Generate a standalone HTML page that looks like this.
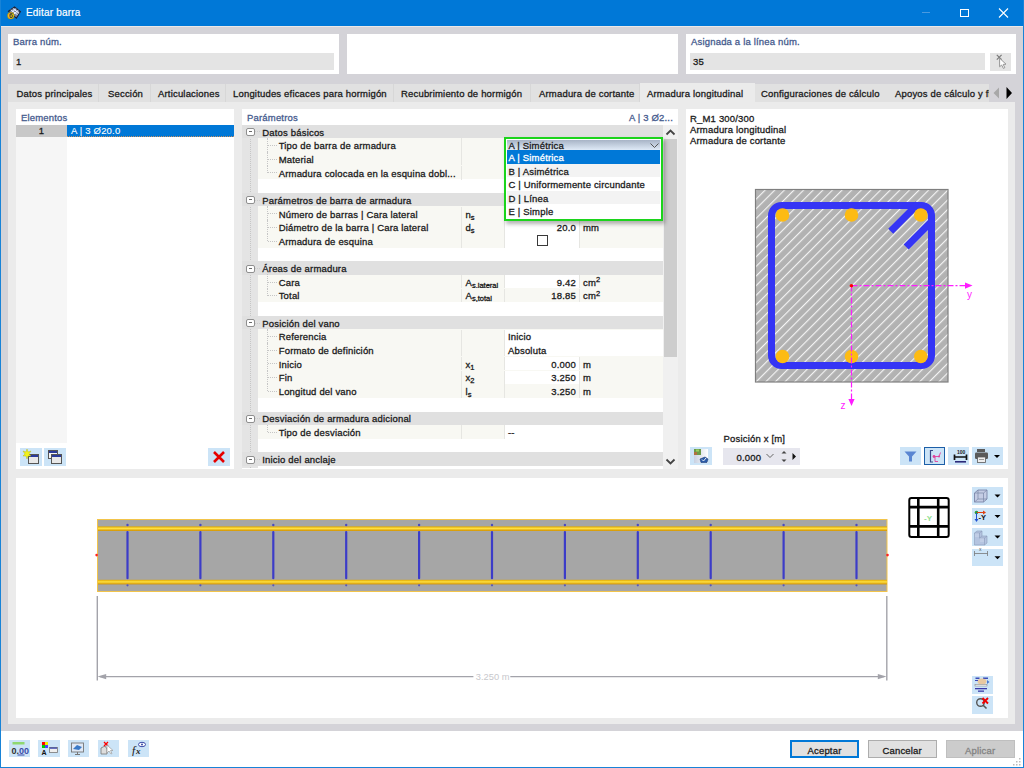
<!DOCTYPE html>
<html><head><meta charset="utf-8"><style>
*{margin:0;padding:0;box-sizing:border-box}
html,body{width:1024px;height:768px;overflow:hidden;background:#d4d3d8}
body{position:relative;font-family:"Liberation Sans",sans-serif;font-size:9.5px;letter-spacing:0.18px;color:#1b1b1b;-webkit-text-stroke-width:0.3px}
.a{position:absolute}
.t{position:absolute;white-space:nowrap;line-height:13.667px;padding-top:0.8px}
.lbl{color:#465b8e}
svg{position:absolute;overflow:visible}
svg text{-webkit-text-stroke-width:0;letter-spacing:0}
sub{font-size:7.5px;vertical-align:baseline;position:relative;top:2px;line-height:0;letter-spacing:0}
sup{font-size:7.5px;vertical-align:baseline;position:relative;top:-3.5px;line-height:0;letter-spacing:0}
</style></head><body>
<div class="a" style="left:0px;top:0px;width:1024px;height:26px;background:#0078d7;"></div>
<div class="a" style="left:0px;top:0px;width:1px;height:768px;background:#1883d7;"></div>
<div class="a" style="left:1023px;top:0px;width:1px;height:768px;background:#1883d7;"></div>
<div class="a" style="left:0px;top:767px;width:1024px;height:1px;background:#1883d7;"></div>
<div class="a" style="left:1px;top:26px;width:1022px;height:1px;background:#ece8e8;"></div>
<svg style="left:0;top:0" width="30" height="26"><path d="M8.5 11.3 L14.5 7 L20.4 11.7 L16.4 18.1 Z" fill="#7c88a8" stroke="#1c2234" stroke-width="1.1"/><path d="M10.8 9.8 L17.6 14.7 M12.8 8.4 L19.1 13.3 M10.6 13.2 L16.2 8.6 M12.8 14.9 L18.4 10.3" stroke="#eef2ff" stroke-width="1"/><circle cx="10.8" cy="15.7" r="3.4" fill="#f5c518" stroke="#8a6a08" stroke-width="0.5"/><text x="8.9" y="18.4" font-size="7" font-family="Liberation Sans" font-weight="bold" fill="#3a3a3a">6</text></svg>
<div class="t" style="left:26px;top:5.7px;color:#fff;line-height:14px;font-size:10px;-webkit-text-stroke-width:0.2px">Editar barra</div>
<div class="a" style="left:922px;top:12px;width:8px;height:1px;background:#4a9ae0;"></div>
<div class="a" style="left:960px;top:8.5px;width:9px;height:8.5px;background:transparent;border:1px solid #fff"></div>
<svg style="left:998px;top:8px" width="11" height="10"><path d="M1 0.5 L10 9.5 M10 0.5 L1 9.5" stroke="#fff" stroke-width="1.1"/></svg>
<div class="a" style="left:8px;top:34px;width:331px;height:40px;background:#fff;"></div>
<div class="t lbl" style="left:13px;top:34px;">Barra núm.</div>
<div class="a" style="left:13px;top:53px;width:321px;height:17px;background:#e4e4e4;"></div>
<div class="t" style="left:16px;top:54.5px;">1</div>
<div class="a" style="left:347px;top:34px;width:331px;height:40px;background:#fff;"></div>
<div class="a" style="left:686px;top:34px;width:330px;height:40px;background:#fff;"></div>
<div class="t lbl" style="left:691px;top:34px;">Asignada a la línea núm.</div>
<div class="a" style="left:690px;top:53px;width:295px;height:17px;background:#e4e4e4;"></div>
<div class="t" style="left:693px;top:54.5px;">35</div>
<div class="a" style="left:990px;top:53px;width:21px;height:18px;background:#e4e4e4;"></div>
<svg style="left:990px;top:53px" width="21" height="18"><path d="M6.8 1.9 L11.6 6.6 M11.6 1.9 L6.8 6.6" stroke="#7a7a7a" stroke-width="1.2"/><path d="M9.6 5.2 L9.6 13.8 L11.6 12 L13.4 15.4 L14.8 14.7 L13.2 11.4 L16 11.2 Z" fill="#fff" stroke="#8c8c8c" stroke-width="0.9"/></svg>
<div class="a" style="left:8px;top:84px;width:982px;height:18px;background:#e1e1e1;"></div>
<div class="a" style="left:8px;top:102px;width:1007px;height:622px;background:#ebebeb;"></div>
<div class="a" style="left:98px;top:84px;width:1px;height:18px;background:#d7d7d7;"></div>
<div class="a" style="left:150px;top:84px;width:1px;height:18px;background:#d7d7d7;"></div>
<div class="a" style="left:225px;top:84px;width:1px;height:18px;background:#d7d7d7;"></div>
<div class="a" style="left:393px;top:84px;width:1px;height:18px;background:#d7d7d7;"></div>
<div class="a" style="left:530px;top:84px;width:1px;height:18px;background:#d7d7d7;"></div>
<div class="a" style="left:639px;top:84px;width:1px;height:18px;background:#d7d7d7;"></div>
<div class="a" style="left:640px;top:83px;width:115px;height:19px;background:#ebebeb;"></div>
<div class="a" style="left:989px;top:84px;width:1px;height:18px;background:#d7d7d7;"></div>
<div class="t" style="left:895px;top:86.5px;">Apoyos de cálculo y fl</div>
<div class="t" style="left:16.5px;top:86.5px;">Datos principales</div>
<div class="t" style="left:108px;top:86.5px;">Sección</div>
<div class="t" style="left:158px;top:86.5px;">Articulaciones</div>
<div class="t" style="left:233px;top:86.5px;">Longitudes eficaces para hormigón</div>
<div class="t" style="left:401px;top:86.5px;">Recubrimiento de hormigón</div>
<div class="t" style="left:539px;top:86.5px;">Armadura de cortante</div>
<div class="t" style="left:647px;top:86.5px;">Armadura longitudinal</div>
<div class="t" style="left:761px;top:86.5px;">Configuraciones de cálculo</div>
<div class="a" style="left:989px;top:84px;width:26px;height:18px;background:#d4d3d8;"></div>
<svg style="left:990px;top:84px" width="26" height="18"><path d="M9 3.5 L3.5 9 L9 14.5 Z" fill="#a8a8a8"/><path d="M16.5 3 L22 9 L16.5 15 Z" fill="#000"/></svg>
<div class="a" style="left:16px;top:109px;width:218px;height:360px;background:#fff;"></div>
<div class="t lbl" style="left:21px;top:110px;">Elementos</div>
<div class="a" style="left:16px;top:137px;width:51px;height:306px;background:#f6f6f6;"></div>
<div class="a" style="left:16px;top:125px;width:51px;height:12px;background:#c8c8c8;"></div>
<div class="t" style="left:16px;top:123.7px;width:51px;text-align:center">1</div>
<div class="a" style="left:67px;top:125px;width:167px;height:12px;background:#0078d7;border-bottom:1px dotted #c89060"></div>
<div class="t" style="left:71px;top:123.7px;color:#fff;-webkit-text-stroke-width:0.1px">A | 3 Ø20.0</div>
<div class="a" style="left:20px;top:448px;width:22px;height:18px;background:#cce4f7;"></div>
<div class="a" style="left:44px;top:448px;width:22px;height:18px;background:#cce4f7;"></div>
<div class="a" style="left:208px;top:448px;width:22px;height:18px;background:#cce4f7;"></div>
<svg style="left:20px;top:448px" width="46" height="18"><rect x="8.5" y="6.5" width="10" height="9" fill="#e8e8e8" stroke="#555" stroke-width="1"/><rect x="9" y="7" width="9" height="2" fill="#2a3a9a"/><path d="M7 1 L8 4 L11 3 L9 6 L11 8 L8 8 L7 11 L6 8 L3 8 L5 6 L3 3 L6 4 Z" fill="#f2f21a" stroke="#b0b000" stroke-width="0.4"/><rect x="28.5" y="2.5" width="9" height="8" fill="#f4f4f4" stroke="#555" stroke-width="1"/><rect x="29" y="3" width="8" height="2" fill="#2a3a9a"/><rect x="31.5" y="6.5" width="10" height="9" fill="#e8e8e8" stroke="#555" stroke-width="1"/><rect x="32" y="7" width="9" height="2" fill="#2a3a9a"/></svg>
<svg style="left:208px;top:448px" width="22" height="18"><path d="M6 4 L16 14 M16 4 L6 14" stroke="#e60000" stroke-width="2.6"/></svg>
<div class="a" style="left:242px;top:109px;width:436px;height:360px;background:#fff;"></div>
<div class="t lbl" style="left:247px;top:110px;">Parámetros</div>
<div class="t lbl" style="right:351px;top:110px;">A | 3 Ø2...</div>
<div class="a" style="left:242px;top:124.8px;width:421px;height:343.7px;overflow:hidden;background:#fff">
<div class="a" style="left:0;top:0;width:16px;height:360px;background:#e4e4e4"></div>
<div class="a" style="left:8px;top:11px;width:0;height:360px;border-left:1px dotted #c6c6c6"></div>
<div class="a" style="left:0;top:0.0px;width:421px;height:13.2px;background:#e0e0e0"></div>
<div class="a" style="left:4.1px;top:3.20px;width:8.6px;height:8.1px;background:#fff;border:1.4px solid #8f8f8f;border-radius:2px"></div>
<div class="a" style="left:7px;top:6.40px;width:3px;height:1px;background:#6a6a6a"></div>
<div class="a" style="left:13px;top:6.60px;width:5px;height:0;border-top:1px dotted #cccccc"></div>
<div class="t" style="left:20.3px;top:0.0px">Datos básicos</div>
<div class="a" style="left:16px;top:13.20px;width:405px;height:14.1px;background:#f8f8f3"></div>
<div class="a" style="left:262px;top:13.65px;width:75px;height:13.8px;background:#fff"></div>
<div class="a" style="left:219px;top:13.65px;width:1px;height:13.8px;background:#e6e6e2"></div>
<div class="a" style="left:262px;top:13.65px;width:1px;height:13.8px;background:#e6e6e2"></div>
<div class="a" style="left:337px;top:13.65px;width:1px;height:13.8px;background:#e6e6e2"></div>
<div class="a" style="left:25px;top:13.15px;width:0;height:14.2px;border-left:1px dotted #c6c6c6"></div>
<div class="a" style="left:26px;top:20.25px;width:9px;height:0;border-top:1px dotted #c6c6c6"></div>
<div class="t" style="left:36.7px;top:13.65px">Tipo de barra de armadura</div>
<div class="a" style="left:16px;top:26.86px;width:405px;height:14.1px;background:#f8f8f3"></div>
<div class="a" style="left:262px;top:27.31px;width:75px;height:13.8px;background:#fff"></div>
<div class="a" style="left:219px;top:27.31px;width:1px;height:13.8px;background:#e6e6e2"></div>
<div class="a" style="left:262px;top:27.31px;width:1px;height:13.8px;background:#e6e6e2"></div>
<div class="a" style="left:337px;top:27.31px;width:1px;height:13.8px;background:#e6e6e2"></div>
<div class="a" style="left:25px;top:26.81px;width:0;height:14.2px;border-left:1px dotted #c6c6c6"></div>
<div class="a" style="left:26px;top:33.91px;width:9px;height:0;border-top:1px dotted #c6c6c6"></div>
<div class="t" style="left:36.7px;top:27.31px">Material</div>
<div class="a" style="left:16px;top:40.51px;width:405px;height:14.1px;background:#f8f8f3"></div>
<div class="a" style="left:262px;top:40.96px;width:75px;height:13.8px;background:#fff"></div>
<div class="a" style="left:219px;top:40.96px;width:1px;height:13.8px;background:#e6e6e2"></div>
<div class="a" style="left:262px;top:40.96px;width:1px;height:13.8px;background:#e6e6e2"></div>
<div class="a" style="left:337px;top:40.96px;width:1px;height:13.8px;background:#e6e6e2"></div>
<div class="a" style="left:25px;top:40.46px;width:0;height:7.5px;border-left:1px dotted #c6c6c6"></div>
<div class="a" style="left:26px;top:47.56px;width:9px;height:0;border-top:1px dotted #c6c6c6"></div>
<div class="t" style="left:36.7px;top:40.96px">Armadura colocada en la esquina dobl...</div>
<div class="a" style="left:0;top:68.27px;width:421px;height:13.2px;background:#e0e0e0"></div>
<div class="a" style="left:4.1px;top:71.47px;width:8.6px;height:8.1px;background:#fff;border:1.4px solid #8f8f8f;border-radius:2px"></div>
<div class="a" style="left:7px;top:74.67px;width:3px;height:1px;background:#6a6a6a"></div>
<div class="a" style="left:13px;top:74.87px;width:5px;height:0;border-top:1px dotted #cccccc"></div>
<div class="t" style="left:20.3px;top:68.27px">Parámetros de barra de armadura</div>
<div class="a" style="left:16px;top:81.47px;width:405px;height:14.1px;background:#f8f8f3"></div>
<div class="a" style="left:262px;top:81.92px;width:75px;height:13.8px;background:#fff"></div>
<div class="a" style="left:219px;top:81.92px;width:1px;height:13.8px;background:#e6e6e2"></div>
<div class="a" style="left:262px;top:81.92px;width:1px;height:13.8px;background:#e6e6e2"></div>
<div class="a" style="left:337px;top:81.92px;width:1px;height:13.8px;background:#e6e6e2"></div>
<div class="a" style="left:25px;top:81.42px;width:0;height:14.2px;border-left:1px dotted #c6c6c6"></div>
<div class="a" style="left:26px;top:88.52px;width:9px;height:0;border-top:1px dotted #c6c6c6"></div>
<div class="t" style="left:36.7px;top:81.92px">Número de barras | Cara lateral</div>
<div class="t sym" style="left:223.4px;top:81.92px">n<sub>s</sub></div>
<div class="a" style="left:16px;top:95.12px;width:405px;height:14.1px;background:#f8f8f3"></div>
<div class="a" style="left:262px;top:95.57px;width:75px;height:13.8px;background:#fff"></div>
<div class="a" style="left:219px;top:95.57px;width:1px;height:13.8px;background:#e6e6e2"></div>
<div class="a" style="left:262px;top:95.57px;width:1px;height:13.8px;background:#e6e6e2"></div>
<div class="a" style="left:337px;top:95.57px;width:1px;height:13.8px;background:#e6e6e2"></div>
<div class="a" style="left:25px;top:95.07px;width:0;height:14.2px;border-left:1px dotted #c6c6c6"></div>
<div class="a" style="left:26px;top:102.17px;width:9px;height:0;border-top:1px dotted #c6c6c6"></div>
<div class="t" style="left:36.7px;top:95.57px">Diámetro de la barra | Cara lateral</div>
<div class="t sym" style="left:223.4px;top:95.57px">d<sub>s</sub></div>
<div class="t" style="right:87px;top:95.57px">20.0</div>
<div class="t" style="left:341px;top:95.57px">mm</div>
<div class="a" style="left:16px;top:108.77px;width:405px;height:14.1px;background:#f8f8f3"></div>
<div class="a" style="left:262px;top:109.22px;width:75px;height:13.8px;background:#fff"></div>
<div class="a" style="left:219px;top:109.22px;width:1px;height:13.8px;background:#e6e6e2"></div>
<div class="a" style="left:262px;top:109.22px;width:1px;height:13.8px;background:#e6e6e2"></div>
<div class="a" style="left:337px;top:109.22px;width:1px;height:13.8px;background:#e6e6e2"></div>
<div class="a" style="left:25px;top:108.72px;width:0;height:7.5px;border-left:1px dotted #c6c6c6"></div>
<div class="a" style="left:26px;top:115.82px;width:9px;height:0;border-top:1px dotted #c6c6c6"></div>
<div class="t" style="left:36.7px;top:109.22px">Armadura de esquina</div>
<div class="a" style="left:295.2px;top:110.62px;width:10.8px;height:10.8px;background:#fff;border:1.2px solid #3a3a3a"></div>
<div class="a" style="left:0;top:136.53px;width:421px;height:13.2px;background:#e0e0e0"></div>
<div class="a" style="left:4.1px;top:139.73px;width:8.6px;height:8.1px;background:#fff;border:1.4px solid #8f8f8f;border-radius:2px"></div>
<div class="a" style="left:7px;top:142.93px;width:3px;height:1px;background:#6a6a6a"></div>
<div class="a" style="left:13px;top:143.13px;width:5px;height:0;border-top:1px dotted #cccccc"></div>
<div class="t" style="left:20.3px;top:136.53px">Áreas de armadura</div>
<div class="a" style="left:16px;top:149.73px;width:405px;height:14.1px;background:#f8f8f3"></div>
<div class="a" style="left:262px;top:150.18px;width:75px;height:13.8px;background:#fff"></div>
<div class="a" style="left:219px;top:150.18px;width:1px;height:13.8px;background:#e6e6e2"></div>
<div class="a" style="left:262px;top:150.18px;width:1px;height:13.8px;background:#e6e6e2"></div>
<div class="a" style="left:337px;top:150.18px;width:1px;height:13.8px;background:#e6e6e2"></div>
<div class="a" style="left:25px;top:149.68px;width:0;height:14.2px;border-left:1px dotted #c6c6c6"></div>
<div class="a" style="left:26px;top:156.78px;width:9px;height:0;border-top:1px dotted #c6c6c6"></div>
<div class="t" style="left:36.7px;top:150.18px">Cara</div>
<div class="t sym" style="left:223.4px;top:150.18px">A<sub>s,lateral</sub></div>
<div class="t" style="right:87px;top:150.18px">9.42</div>
<div class="t" style="left:341px;top:150.18px">cm<sup>2</sup></div>
<div class="a" style="left:16px;top:163.39px;width:405px;height:14.1px;background:#f8f8f3"></div>
<div class="a" style="left:219px;top:163.84px;width:1px;height:13.8px;background:#e6e6e2"></div>
<div class="a" style="left:262px;top:163.84px;width:1px;height:13.8px;background:#e6e6e2"></div>
<div class="a" style="left:337px;top:163.84px;width:1px;height:13.8px;background:#e6e6e2"></div>
<div class="a" style="left:25px;top:163.34px;width:0;height:7.5px;border-left:1px dotted #c6c6c6"></div>
<div class="a" style="left:26px;top:170.44px;width:9px;height:0;border-top:1px dotted #c6c6c6"></div>
<div class="t" style="left:36.7px;top:163.84px">Total</div>
<div class="t sym" style="left:223.4px;top:163.84px">A<sub>s,total</sub></div>
<div class="t" style="right:87px;top:163.84px">18.85</div>
<div class="t" style="left:341px;top:163.84px">cm<sup>2</sup></div>
<div class="a" style="left:0;top:191.14px;width:421px;height:13.2px;background:#e0e0e0"></div>
<div class="a" style="left:4.1px;top:194.34px;width:8.6px;height:8.1px;background:#fff;border:1.4px solid #8f8f8f;border-radius:2px"></div>
<div class="a" style="left:7px;top:197.54px;width:3px;height:1px;background:#6a6a6a"></div>
<div class="a" style="left:13px;top:197.74px;width:5px;height:0;border-top:1px dotted #cccccc"></div>
<div class="t" style="left:20.3px;top:191.14px">Posición del vano</div>
<div class="a" style="left:16px;top:204.35px;width:405px;height:14.1px;background:#f8f8f3"></div>
<div class="a" style="left:262px;top:204.8px;width:159px;height:13.8px;background:#fff"></div>
<div class="a" style="left:219px;top:204.8px;width:1px;height:13.8px;background:#e6e6e2"></div>
<div class="a" style="left:262px;top:204.8px;width:1px;height:13.8px;background:#e6e6e2"></div>
<div class="a" style="left:25px;top:204.30px;width:0;height:14.2px;border-left:1px dotted #c6c6c6"></div>
<div class="a" style="left:26px;top:211.40px;width:9px;height:0;border-top:1px dotted #c6c6c6"></div>
<div class="t" style="left:36.7px;top:204.8px">Referencia</div>
<div class="t" style="left:266px;top:204.8px">Inicio</div>
<div class="a" style="left:16px;top:218.00px;width:405px;height:14.1px;background:#f8f8f3"></div>
<div class="a" style="left:262px;top:218.45px;width:159px;height:13.8px;background:#fff"></div>
<div class="a" style="left:219px;top:218.45px;width:1px;height:13.8px;background:#e6e6e2"></div>
<div class="a" style="left:262px;top:218.45px;width:1px;height:13.8px;background:#e6e6e2"></div>
<div class="a" style="left:25px;top:217.95px;width:0;height:14.2px;border-left:1px dotted #c6c6c6"></div>
<div class="a" style="left:26px;top:225.05px;width:9px;height:0;border-top:1px dotted #c6c6c6"></div>
<div class="t" style="left:36.7px;top:218.45px">Formato de definición</div>
<div class="t" style="left:266px;top:218.45px">Absoluta</div>
<div class="a" style="left:16px;top:231.65px;width:405px;height:14.1px;background:#f8f8f3"></div>
<div class="a" style="left:262px;top:232.1px;width:75px;height:13.8px;background:#fff"></div>
<div class="a" style="left:219px;top:232.1px;width:1px;height:13.8px;background:#e6e6e2"></div>
<div class="a" style="left:262px;top:232.1px;width:1px;height:13.8px;background:#e6e6e2"></div>
<div class="a" style="left:337px;top:232.1px;width:1px;height:13.8px;background:#e6e6e2"></div>
<div class="a" style="left:25px;top:231.60px;width:0;height:14.2px;border-left:1px dotted #c6c6c6"></div>
<div class="a" style="left:26px;top:238.70px;width:9px;height:0;border-top:1px dotted #c6c6c6"></div>
<div class="t" style="left:36.7px;top:232.1px">Inicio</div>
<div class="t sym" style="left:223.4px;top:232.1px">x<sub>1</sub></div>
<div class="t" style="right:87px;top:232.1px">0.000</div>
<div class="t" style="left:341px;top:232.1px">m</div>
<div class="a" style="left:16px;top:245.30px;width:405px;height:14.1px;background:#f8f8f3"></div>
<div class="a" style="left:262px;top:245.75px;width:75px;height:13.8px;background:#fff"></div>
<div class="a" style="left:219px;top:245.75px;width:1px;height:13.8px;background:#e6e6e2"></div>
<div class="a" style="left:262px;top:245.75px;width:1px;height:13.8px;background:#e6e6e2"></div>
<div class="a" style="left:337px;top:245.75px;width:1px;height:13.8px;background:#e6e6e2"></div>
<div class="a" style="left:25px;top:245.25px;width:0;height:14.2px;border-left:1px dotted #c6c6c6"></div>
<div class="a" style="left:26px;top:252.35px;width:9px;height:0;border-top:1px dotted #c6c6c6"></div>
<div class="t" style="left:36.7px;top:245.75px">Fin</div>
<div class="t sym" style="left:223.4px;top:245.75px">x<sub>2</sub></div>
<div class="t" style="right:87px;top:245.75px">3.250</div>
<div class="t" style="left:341px;top:245.75px">m</div>
<div class="a" style="left:16px;top:258.96px;width:405px;height:14.1px;background:#f8f8f3"></div>
<div class="a" style="left:219px;top:259.41px;width:1px;height:13.8px;background:#e6e6e2"></div>
<div class="a" style="left:262px;top:259.41px;width:1px;height:13.8px;background:#e6e6e2"></div>
<div class="a" style="left:337px;top:259.41px;width:1px;height:13.8px;background:#e6e6e2"></div>
<div class="a" style="left:25px;top:258.91px;width:0;height:7.5px;border-left:1px dotted #c6c6c6"></div>
<div class="a" style="left:26px;top:266.01px;width:9px;height:0;border-top:1px dotted #c6c6c6"></div>
<div class="t" style="left:36.7px;top:259.41px">Longitud del vano</div>
<div class="t sym" style="left:223.4px;top:259.41px">l<sub>s</sub></div>
<div class="t" style="right:87px;top:259.41px">3.250</div>
<div class="t" style="left:341px;top:259.41px">m</div>
<div class="a" style="left:0;top:286.71px;width:421px;height:13.2px;background:#e0e0e0"></div>
<div class="a" style="left:4.1px;top:289.91px;width:8.6px;height:8.1px;background:#fff;border:1.4px solid #8f8f8f;border-radius:2px"></div>
<div class="a" style="left:7px;top:293.11px;width:3px;height:1px;background:#6a6a6a"></div>
<div class="a" style="left:13px;top:293.31px;width:5px;height:0;border-top:1px dotted #cccccc"></div>
<div class="t" style="left:20.3px;top:286.71px">Desviación de armadura adicional</div>
<div class="a" style="left:16px;top:299.92px;width:405px;height:14.1px;background:#f8f8f3"></div>
<div class="a" style="left:262px;top:300.37px;width:159px;height:13.8px;background:#fff"></div>
<div class="a" style="left:219px;top:300.37px;width:1px;height:13.8px;background:#e6e6e2"></div>
<div class="a" style="left:262px;top:300.37px;width:1px;height:13.8px;background:#e6e6e2"></div>
<div class="a" style="left:25px;top:299.87px;width:0;height:7.5px;border-left:1px dotted #c6c6c6"></div>
<div class="a" style="left:26px;top:306.97px;width:9px;height:0;border-top:1px dotted #c6c6c6"></div>
<div class="t" style="left:36.7px;top:300.37px">Tipo de desviación</div>
<div class="t" style="left:266px;top:300.37px">--</div>
<div class="a" style="left:0;top:327.67px;width:421px;height:13.2px;background:#e0e0e0"></div>
<div class="a" style="left:4.1px;top:330.87px;width:8.6px;height:8.1px;background:#fff;border:1.4px solid #8f8f8f;border-radius:2px"></div>
<div class="a" style="left:7px;top:334.07px;width:3px;height:1px;background:#6a6a6a"></div>
<div class="a" style="left:13px;top:334.27px;width:5px;height:0;border-top:1px dotted #cccccc"></div>
<div class="t" style="left:20.3px;top:327.67px">Inicio del anclaje</div>
</div>
<div class="a" style="left:663px;top:125px;width:15px;height:344px;background:#f0f0f0;"></div>
<div class="a" style="left:664px;top:139px;width:13px;height:218px;background:#cdcdcd;"></div>
<svg style="left:663px;top:125px" width="15" height="344"><path d="M3.5 9.5 L7.5 5.5 L11.5 9.5" fill="none" stroke="#444" stroke-width="1.8"/><path d="M3.5 334.5 L7.5 338.5 L11.5 334.5" fill="none" stroke="#444" stroke-width="1.8"/></svg>
<div class="a" style="left:506px;top:140px;width:3px;height:1px;background:transparent;"></div>
<div class="a" style="left:504px;top:137.3px;width:159px;height:83.7px;border:2.7px solid #1cd41c;background:#fff;box-shadow:2px 3px 4px rgba(0,0,0,0.3)"></div>
<div class="a" style="left:506.7px;top:140px;width:153.6px;height:10px;background:linear-gradient(#a8b4c6,#dfeaf7)"></div>
<div class="t" style="left:508.5px;top:137.8px;">A | Simétrica</div>
<svg style="left:649px;top:142px" width="12" height="8"><path d="M1.5 1.5 L5.5 5.5 L9.5 1.5" fill="none" stroke="#555" stroke-width="1"/></svg>
<div class="a" style="left:506.7px;top:150.0px;width:153.6px;height:13.6px;background:#0078d7"></div>
<div class="t" style="left:508.5px;top:150.3px;color:#fff">A | Simétrica</div>
<div class="a" style="left:506.7px;top:163.6px;width:153.6px;height:13.6px;background:#f3f3f3"></div>
<div class="t" style="left:508.5px;top:163.9px;color:#1b1b1b">B | Asimétrica</div>
<div class="a" style="left:506.7px;top:177.2px;width:153.6px;height:13.6px;background:#fff"></div>
<div class="t" style="left:508.5px;top:177.5px;color:#1b1b1b">C | Uniformemente circundante</div>
<div class="a" style="left:506.7px;top:190.8px;width:153.6px;height:13.6px;background:#f3f3f3"></div>
<div class="t" style="left:508.5px;top:191.10000000000002px;color:#1b1b1b">D | Línea</div>
<div class="a" style="left:506.7px;top:204.4px;width:153.6px;height:13.6px;background:#fff"></div>
<div class="t" style="left:508.5px;top:204.70000000000002px;color:#1b1b1b">E | Simple</div>
<div class="a" style="left:686px;top:109px;width:322px;height:360px;background:#fff;"></div>
<div class="t" style="left:690px;top:112.7px;line-height:11px">R_M1 300/300</div>
<div class="t" style="left:690px;top:123.7px;line-height:11px">Armadura longitudinal</div>
<div class="t" style="left:690px;top:134.7px;line-height:11px">Armadura de cortante</div>
<div class="a" style="left:690px;top:447px;width:22px;height:18px;background:#cce4f7;"></div>
<svg style="left:690px;top:447px" width="22" height="18"><defs><linearGradient id="pg" x1="0" y1="0" x2="1" y2="0"><stop offset="0" stop-color="#c8d0e0"/><stop offset="1" stop-color="#fff"/></linearGradient></defs><rect x="4" y="2" width="14" height="14" fill="url(#pg)"/><rect x="4" y="2" width="7" height="6" fill="#6a9a48"/><rect x="6" y="2.5" width="3" height="2" fill="#9ad060"/><rect x="4" y="5" width="3" height="3" fill="#b07040"/><path d="M10 12 L15 10 L18 12 L17 15.5 L11 15.5 Z" fill="#2a5aa8" stroke="#1a3a78" stroke-width="0.6"/><path d="M12 12.5 L13.5 14 L16 11" stroke="#fff" stroke-width="0.9" fill="none"/></svg>
<div class="t" style="left:723.5px;top:431px;">Posición x [m]</div>
<div class="a" style="left:723px;top:448px;width:77px;height:17px;background:#e6e6ee;"></div>
<div class="t" style="left:736.5px;top:450.5px;">0.000</div>
<svg style="left:723px;top:448px" width="77" height="17"><path d="M43.5 6 L47 9.5 L50.5 6" fill="none" stroke="#666" stroke-width="1"/><path d="M58.5 5.5 L61 3 L63.5 5.5 Z" fill="#444"/><path d="M58.5 11.5 L61 14 L63.5 11.5 Z" fill="#444"/><path d="M69.5 5 L73 8.5 L69.5 12 Z" fill="#111"/></svg>
<div class="a" style="left:900px;top:447px;width:21px;height:18px;background:#cce4f7;"></div>
<div class="a" style="left:924px;top:447px;width:21px;height:18px;background:#cce4f7;"></div>
<div class="a" style="left:948px;top:447px;width:21px;height:18px;background:#cce4f7;"></div>
<div class="a" style="left:972px;top:447px;width:31px;height:18px;background:#cce4f7;"></div>
<div class="a" style="left:924px;top:447px;width:21px;height:18px;background:#cce4f7;border:1.3px solid #1c5fa8"></div>
<svg style="left:900px;top:447px" width="104" height="18"><path d="M4.5 4.5 L16.5 4.5 L12 9.5 L12 14.5 L9 14.5 L9 9.5 Z" fill="#5a86d2"/><path d="M33 3.5 L30.5 3.5 L30.5 15 L33 15" fill="none" stroke="#3a4a8a" stroke-width="1.2"/><path d="M34 9.5 L39 9.5 L40.5 5.5 M35 10 L35 14.5 L38 14.5" stroke="#e0409a" stroke-width="0.9" fill="none"/><circle cx="34" cy="9.5" r="1.4" fill="#e0409a"/><circle cx="39" cy="9.5" r="1" fill="#e0409a"/><path d="M54.5 7.5 L54.5 13 M66.5 7.5 L66.5 13 M54.5 10 L66.5 10" stroke="#111" stroke-width="1.7"/><rect x="55" y="14" width="11" height="1.6" fill="#2a2a7a"/><text x="57" y="6.5" font-size="5" font-family="Liberation Sans" font-weight="bold" fill="#222">100</text><rect x="77" y="2" width="8" height="3" fill="#5a5a5a"/><rect x="75" y="5.5" width="13" height="6.5" rx="1.2" fill="#5a5a5a"/><rect x="77.5" y="10" width="8" height="5.5" fill="#eee" stroke="#5a5a5a" stroke-width="0.8"/><rect x="79" y="12" width="5" height="0.8" fill="#888"/><path d="M94 8 L100 8 L97 11 Z" fill="#000"/></svg>
<div class="a" style="left:16px;top:478px;width:992px;height:240px;background:#fff;"></div>
<svg style="left:0;top:0" width="1024" height="768">
<defs><pattern id="hatch" patternUnits="userSpaceOnUse" width="6.8" height="6.8" patternTransform="translate(2.4,0) rotate(45)"><rect x="0" y="0" width="6.8" height="6.8" fill="#b2b2b2"/><rect x="0" y="0" width="1.15" height="6.8" fill="#f4f4f4"/></pattern><linearGradient id="rebar" x1="0" y1="0" x2="0" y2="1"><stop offset="0" stop-color="#e0a800"/><stop offset="0.45" stop-color="#ffe040"/><stop offset="1" stop-color="#d09000"/></linearGradient></defs>
<rect x="755.5" y="189.5" width="192.5" height="192.5" fill="url(#hatch)" stroke="#7f7f7f" stroke-width="1.2"/>
<rect x="771.5" y="205.5" width="160" height="160" rx="10" ry="10" fill="none" stroke="#3535f5" stroke-width="7"/>
<line x1="890.7" y1="231.3" x2="918" y2="204" stroke="#3535f5" stroke-width="7"/>
<line x1="906.2" y1="247" x2="933" y2="220" stroke="#3535f5" stroke-width="7"/>
<circle cx="782.5" cy="215" r="6.8" fill="#fdbb13"/>
<circle cx="782.5" cy="356.5" r="6.8" fill="#fdbb13"/>
<circle cx="851.5" cy="215" r="6.8" fill="#fdbb13"/>
<circle cx="851.5" cy="356.5" r="6.8" fill="#fdbb13"/>
<circle cx="920.8" cy="215" r="6.8" fill="#fdbb13"/>
<circle cx="920.8" cy="356.5" r="6.8" fill="#fdbb13"/>
<line x1="851.5" y1="285.6" x2="966" y2="285.6" stroke="#ff1cff" stroke-width="1.2" stroke-dasharray="6,2,2,2"/>
<path d="M965 282.5 L972.5 285.6 L965 288.7 Z" fill="#ff1cff"/>
<line x1="851.5" y1="285.6" x2="851.5" y2="399" stroke="#ff1cff" stroke-width="1.2" stroke-dasharray="6,2,2,2"/>
<path d="M848.4 399 L851.5 406 L854.6 399 Z" fill="#ff1cff"/>
<circle cx="851.4" cy="285.7" r="1.8" fill="#ff0000"/>
<text x="967" y="297.5" font-family="Liberation Sans" font-size="10" fill="#ff1cff">y</text>
<text x="840.5" y="409" font-family="Liberation Sans" font-size="10" fill="#ff1cff">z</text>
<rect x="97.5" y="519.5" width="789.5" height="72" fill="#a6a6a6" stroke="#f2c44a" stroke-width="1"/>
<rect x="98" y="526.4" width="789" height="4.6" fill="url(#rebar)"/>
<rect x="98" y="579.8" width="789" height="4.6" fill="url(#rebar)"/>
<line x1="127.50" y1="532" x2="127.50" y2="578.2" stroke="#3c3cc8" stroke-width="2.2" stroke-linecap="round"/>
<circle cx="127.50" cy="525" r="1.2" fill="#4a4ac0"/>
<circle cx="127.50" cy="585.3" r="1.1" fill="#5a5ab8"/>
<line x1="200.40" y1="532" x2="200.40" y2="578.2" stroke="#3c3cc8" stroke-width="2.2" stroke-linecap="round"/>
<circle cx="200.40" cy="525" r="1.2" fill="#4a4ac0"/>
<circle cx="200.40" cy="585.3" r="1.1" fill="#5a5ab8"/>
<line x1="273.30" y1="532" x2="273.30" y2="578.2" stroke="#3c3cc8" stroke-width="2.2" stroke-linecap="round"/>
<circle cx="273.30" cy="525" r="1.2" fill="#4a4ac0"/>
<circle cx="273.30" cy="585.3" r="1.1" fill="#5a5ab8"/>
<line x1="346.20" y1="532" x2="346.20" y2="578.2" stroke="#3c3cc8" stroke-width="2.2" stroke-linecap="round"/>
<circle cx="346.20" cy="525" r="1.2" fill="#4a4ac0"/>
<circle cx="346.20" cy="585.3" r="1.1" fill="#5a5ab8"/>
<line x1="419.10" y1="532" x2="419.10" y2="578.2" stroke="#3c3cc8" stroke-width="2.2" stroke-linecap="round"/>
<circle cx="419.10" cy="525" r="1.2" fill="#4a4ac0"/>
<circle cx="419.10" cy="585.3" r="1.1" fill="#5a5ab8"/>
<line x1="492.00" y1="532" x2="492.00" y2="578.2" stroke="#3c3cc8" stroke-width="2.2" stroke-linecap="round"/>
<circle cx="492.00" cy="525" r="1.2" fill="#4a4ac0"/>
<circle cx="492.00" cy="585.3" r="1.1" fill="#5a5ab8"/>
<line x1="564.90" y1="532" x2="564.90" y2="578.2" stroke="#3c3cc8" stroke-width="2.2" stroke-linecap="round"/>
<circle cx="564.90" cy="525" r="1.2" fill="#4a4ac0"/>
<circle cx="564.90" cy="585.3" r="1.1" fill="#5a5ab8"/>
<line x1="637.80" y1="532" x2="637.80" y2="578.2" stroke="#3c3cc8" stroke-width="2.2" stroke-linecap="round"/>
<circle cx="637.80" cy="525" r="1.2" fill="#4a4ac0"/>
<circle cx="637.80" cy="585.3" r="1.1" fill="#5a5ab8"/>
<line x1="710.70" y1="532" x2="710.70" y2="578.2" stroke="#3c3cc8" stroke-width="2.2" stroke-linecap="round"/>
<circle cx="710.70" cy="525" r="1.2" fill="#4a4ac0"/>
<circle cx="710.70" cy="585.3" r="1.1" fill="#5a5ab8"/>
<line x1="783.60" y1="532" x2="783.60" y2="578.2" stroke="#3c3cc8" stroke-width="2.2" stroke-linecap="round"/>
<circle cx="783.60" cy="525" r="1.2" fill="#4a4ac0"/>
<circle cx="783.60" cy="585.3" r="1.1" fill="#5a5ab8"/>
<line x1="856.50" y1="532" x2="856.50" y2="578.2" stroke="#3c3cc8" stroke-width="2.2" stroke-linecap="round"/>
<circle cx="856.50" cy="525" r="1.2" fill="#4a4ac0"/>
<circle cx="856.50" cy="585.3" r="1.1" fill="#5a5ab8"/>
<circle cx="96.6" cy="555.1" r="1.3" fill="#ff2020"/>
<circle cx="887.5" cy="555.1" r="1.3" fill="#ff2020"/>
<line x1="97.3" y1="596" x2="97.3" y2="680.5" stroke="#a3a3aa" stroke-width="1.4"/>
<line x1="886.8" y1="596" x2="886.8" y2="680.5" stroke="#a3a3aa" stroke-width="1.4"/>
<line x1="100" y1="676.6" x2="473.4" y2="676.6" stroke="#a3a3aa" stroke-width="1.4"/>
<line x1="510.3" y1="676.6" x2="884" y2="676.6" stroke="#a3a3aa" stroke-width="1.4"/>
<path d="M97.5 676.6 L106.2 673.9 L106.2 679.3 Z" fill="#a3a3aa"/>
<path d="M886.5 676.6 L877.8 673.9 L877.8 679.3 Z" fill="#a3a3aa"/>
<text x="475.8" y="680.4" font-family="Liberation Sans" font-size="9.3" fill="#c8c8cc" letter-spacing="0">3.250 m</text>
</svg>
<svg style="left:906px;top:495px" width="46" height="46"><g fill="none" stroke="#000"><rect x="3.3" y="3.1" width="39.4" height="38.9" rx="2.2" stroke-width="2"/><path d="M12.3 3 L12.3 42 M32.2 3 L32.2 42 M3 12.1 L42.7 12.1 M3 31.4 L42.7 31.4" stroke-width="2.6"/></g><text x="18" y="25.5" font-family="Liberation Sans" font-size="8" font-weight="bold" fill="#90e090">-Y</text></svg>
<div class="a" style="left:972px;top:487.2px;width:31px;height:17.5px;background:#cce4f7;"></div>
<div class="a" style="left:972px;top:507.75px;width:31px;height:17.5px;background:#cce4f7;"></div>
<div class="a" style="left:972px;top:528.3px;width:31px;height:17.5px;background:#cce4f7;"></div>
<div class="a" style="left:972px;top:548.85px;width:31px;height:17.5px;background:#cce4f7;"></div>
<svg style="left:972px;top:487px" width="31" height="82"><g fill="#000"><path d="M22.5 7.5 L28.5 7.5 L25.5 10.5 Z"/><path d="M22.5 28 L28.5 28 L25.5 31 Z"/><path d="M22.5 48.6 L28.5 48.6 L25.5 51.6 Z"/><path d="M22.5 69.2 L28.5 69.2 L25.5 72.2 Z"/></g><path d="M2.5 6 L6 3 L15 3 L15 12 L11.5 15 L2.5 15 Z" fill="#c4cce4" stroke="#7a86a8" stroke-width="0.9"/><path d="M2.5 6 L11.5 6 L11.5 15 M11.5 6 L15 3 M6 3 L6 12 L15 12 M6 12 L2.5 15" fill="none" stroke="#7a86a8" stroke-width="0.7"/><circle cx="4.5" cy="25.5" r="1.8" fill="#2a9a3a"/><path d="M5 25.5 L12 25.5" stroke="#e04010" stroke-width="1"/><path d="M11 23.5 L14 25.5 L11 27.5Z" fill="#e04010"/><path d="M4.5 26 L4.5 33" stroke="#2050d0" stroke-width="1"/><path d="M2.5 32 L4.5 35 L6.5 32Z" fill="#2050d0"/><text x="6.5" y="33" font-size="7.5" font-family="Liberation Sans" font-weight="bold" fill="#111">-Y</text><path d="M2.5 46 L5 44 L10 44 L10 49 L15 49 L15 56 L12.5 58 L2.5 58 Z" fill="#b4c4e0" stroke="#8a9ab8" stroke-width="0.6"/><path d="M2.5 46 L7.5 46 L7.5 51 L12.5 51 L12.5 58 M7.5 46 L10 44 M7.5 51 L10 49 M12.5 51 L15 49" fill="none" stroke="#8a9ab8" stroke-width="0.6"/><path d="M3 47 L7 47 M3 49 L7 49 M8 52 L12 52 M8 54 L12 54" stroke="#dde6f5" stroke-width="0.6"/><path d="M2.5 64 L2.5 69 M15.5 64 L15.5 69 M2.5 66.5 L15.5 66.5" stroke="#777" stroke-width="0.8"/><text x="7" y="64" font-size="5" font-family="Liberation Sans" fill="#555">x</text></svg>
<div class="a" style="left:972px;top:676px;width:21px;height:18px;background:#cce4f7;"></div>
<div class="a" style="left:972px;top:696.25px;width:21px;height:17.5px;background:#cce4f7;"></div>
<svg style="left:972px;top:676px" width="21" height="38"><rect x="3.5" y="1.5" width="4" height="1.5" fill="#3a4ab8"/><rect x="11" y="1.5" width="5" height="1.5" fill="#3a4ab8"/><ellipse cx="10" cy="5.5" rx="4.5" ry="3" fill="#e8c8a0"/><rect x="3" y="4" width="3" height="1" fill="#3a4ab8"/><path d="M15 4 L17.5 6 L15 8 Z" fill="#4a7ad0"/><rect x="3" y="8.5" width="12" height="1.5" fill="#fff" stroke="#777" stroke-width="0.5"/><rect x="3" y="12" width="12" height="1.3" fill="#3a3aa8"/><rect x="6" y="14.5" width="6" height="1.3" fill="#3a3aa8"/><circle cx="8.5" cy="26.5" r="3.8" fill="none" stroke="#555" stroke-width="1.4"/><path d="M11.2 29.2 L14.5 32.5" stroke="#555" stroke-width="1.6"/><path d="M10.5 22 L16 27.5 M16 22 L10.5 27.5" stroke="#f00000" stroke-width="1.9"/></svg>
<div class="a" style="left:1px;top:731px;width:1022px;height:36px;background:#fff;"></div>
<div class="a" style="left:8.6px;top:739.8px;width:21.2px;height:17.5px;background:#cce4f7;"></div>
<div class="a" style="left:38.4px;top:739.8px;width:21.2px;height:17.5px;background:#cce4f7;"></div>
<div class="a" style="left:68.2px;top:739.8px;width:21.2px;height:17.5px;background:#cce4f7;"></div>
<div class="a" style="left:98.0px;top:739.8px;width:21.2px;height:17.5px;background:#cce4f7;"></div>
<div class="a" style="left:127.8px;top:739.8px;width:21.2px;height:17.5px;background:#cce4f7;"></div>
<svg style="left:8px;top:739px" width="145" height="19"><rect x="4.5" y="3" width="12" height="2.5" fill="#8fd870"/><text x="3.5" y="14.5" font-size="9" font-family="Liberation Sans" font-weight="bold" fill="#333" letter-spacing="-0.4">0.<tspan fill="#3a4aa8">00</tspan></text><rect x="9.5" y="15.5" width="7" height="1" fill="#3a4aa8"/><g transform="translate(-6,0)"><rect x="40" y="3" width="3" height="3" fill="#f00"/><rect x="43" y="3" width="3" height="3" fill="#ee0"/><rect x="40" y="6" width="3" height="3" fill="#0c0"/><rect x="43" y="6" width="3" height="3" fill="#44f"/><text x="39.5" y="16" font-size="7" font-family="Liberation Sans" font-weight="bold" fill="#111">A</text><rect x="47.5" y="8.5" width="8" height="5" fill="#eee" stroke="#777" stroke-width="0.8"/><rect x="48" y="8.5" width="7" height="1.2" fill="#2a3aa8"/></g><g transform="translate(-5,0)"><rect x="68.5" y="4" width="12" height="9" fill="#dfe8f5" stroke="#777" stroke-width="0.9"/><path d="M70 10 L74 6 L79 8 L76 11Z" fill="#3a7ac8"/><path d="M74.5 13 L74.5 15 M72 15.5 L77 15.5" stroke="#777"/></g><g transform="translate(-5,0)"><path d="M98 9 L102 7 L104 10 L104 15 L98 15 Z" fill="#ddd" stroke="#777" stroke-width="0.8"/><path d="M101 3 L105 7 M105 3 L101 7" stroke="#f00" stroke-width="1.3"/><path d="M104 6 L104 14 L106 12 L108 15 L109 14.5 L107.5 11.5 L110 11.5 Z" fill="#fff" stroke="#999" stroke-width="0.7"/></g><g transform="translate(-3,0)"><text x="126" y="15" font-size="12" font-family="Liberation Serif" font-style="italic" fill="#222">ƒ</text><text x="131" y="14.5" font-size="9" font-family="Liberation Serif" font-style="italic" font-weight="bold" fill="#222">x</text><ellipse cx="137" cy="5.5" rx="3.5" ry="2.2" fill="#fff" stroke="#3a4aa8" stroke-width="1"/><circle cx="137" cy="5.5" r="1" fill="#3a4aa8"/></g></svg>
<div class="a" style="left:790px;top:740.2px;width:69px;height:18px;background:#e1e1e1;border:2px solid #0078d7"></div>
<div class="t" style="left:790px;top:742.9px;width:69px;text-align:center">Aceptar</div>
<div class="a" style="left:867.7px;top:740.2px;width:69px;height:18px;background:#e1e1e1;border:1px solid #adadad"></div>
<div class="t" style="left:867.7px;top:742.9px;width:69px;text-align:center">Cancelar</div>
<div class="a" style="left:945.6px;top:740.2px;width:69px;height:18px;background:#cccccc;border:1px solid #bfbfbf"></div>
<div class="t" style="left:945.6px;top:742.9px;width:69px;text-align:center;color:#838383">Aplicar</div>
<svg style="left:1012px;top:756px" width="11" height="11"><g fill="#bbb"><rect x="7" y="2" width="1.5" height="1.5"/><rect x="4" y="5" width="1.5" height="1.5"/><rect x="7" y="5" width="1.5" height="1.5"/><rect x="1" y="8" width="1.5" height="1.5"/><rect x="4" y="8" width="1.5" height="1.5"/><rect x="7" y="8" width="1.5" height="1.5"/></g></svg>
</body></html>
